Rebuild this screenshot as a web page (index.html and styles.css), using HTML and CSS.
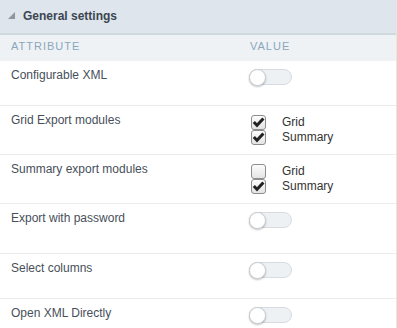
FILE: index.html
```html
<!DOCTYPE html>
<html>
<head>
    <title>General settings</title>
    <meta name="viewport" content="width=device-width, initial-scale=1">
    <link rel="stylesheet" href="styles.css">
</head>
<body>
    <div class="panel">
        <div class="panel-title">
            <span class="caret"></span>
            General settings
        </div>

        <div class="row head">
            <div class="cell">Attribute</div>
            <div class="cell">Value</div>
        </div>

        <div class="row">
            <div class="cell label">Configurable XML</div>
            <div class="cell value"><span class="toggle"></span></div>
        </div>

        <div class="row">
            <div class="cell label">Grid Export modules</div>
            <div class="cell value checks">
                <div class="option"><span class="box checked"></span>Grid</div>
                <div class="option"><span class="box checked"></span>Summary</div>
            </div>
        </div>

        <div class="row">
            <div class="cell label">Summary export modules</div>
            <div class="cell value checks">
                <div class="option"><span class="box"></span>Grid</div>
                <div class="option"><span class="box checked"></span>Summary</div>
            </div>
        </div>

        <div class="row tall">
            <div class="cell label">Export with password</div>
            <div class="cell value"><span class="toggle"></span></div>
        </div>

        <div class="row">
            <div class="cell label">Select columns</div>
            <div class="cell value"><span class="toggle"></span></div>
        </div>

        <div class="row">
            <div class="cell label">Open XML Directly</div>
            <div class="cell value"><span class="toggle"></span></div>
        </div>
    </div>
</body>
</html>
```

FILE: styles.css
```css
body {
    margin: 0;
    font-family: "Liberation Sans", Arial, sans-serif;
    font-size: 12px;
    background: white;
}
.panel {
    width: 396px;
    border-right: 1px solid #e2ebdb;
}
.panel-title {
    display: flex;
    align-items: center;
    height: 31px;
    padding: 0 0 2px 8px;
    background: #dee5ec;
    border-bottom: 2px solid #cfdadf;
    color: #3c4550;
    font-weight: bold;
}
.caret {
    width: 0;
    height: 0;
    margin: 0 8px 1px 0;
    border-left: 7px solid transparent;
    border-bottom: 7px solid #8c97a2;
}
.row {
    display: grid;
    grid-template-columns: 239px 1fr;
    height: 44px;
    border-bottom: 1px solid #e9edf0;
}
.row.tall {
    height: 49px;
}
.row:has(.checks) {
    height: 48px;
}
.row.head {
    height: 22px;
    padding-bottom: 4px;
    background: #eef2f5;
    border-bottom: none;
    line-height: 22px;
    font-size: 11px;
    letter-spacing: 1px;
    text-transform: uppercase;
    color: #8ba6bc;
}
.cell {
    padding-left: 11px;
}
.label {
    padding-top: 6px;
    line-height: 16px;
    color: #474f5a;
}
.value {
    padding-top: 8px;
}
.checks {
    padding-top: 9px;
}
.option {
    display: flex;
    align-items: center;
    height: 15px;
    color: #333;
    line-height: 15px;
}
.box {
    box-sizing: border-box;
    width: 15px;
    height: 15px;
    margin: 0 16px 0 1px;
    border: 1px solid #8d8d8d;
    border-radius: 3px;
    background: linear-gradient(#fcfcfc, #e4e4e4);
}
.box.checked {
    background: url("data:image/svg+xml;utf8,<svg xmlns='http://www.w3.org/2000/svg' width='13' height='13'><path d='M1.8 6 L5 9.3 L11.4 2.4' fill='none' stroke='%23222' stroke-width='3'/></svg>") no-repeat center, linear-gradient(#fcfcfc, #e4e4e4);
}
.toggle {
    position: relative;
    display: block;
    box-sizing: border-box;
    width: 43px;
    height: 16px;
    margin-left: -1px;
    border: 1px solid #d6dce1;
    border-radius: 8px;
    background: #edf1f4;
}
.toggle::before {
    content: "";
    position: absolute;
    left: -1px;
    top: -1px;
    box-sizing: border-box;
    width: 17px;
    height: 17px;
    border: 1px solid #c9ced3;
    border-radius: 50%;
    background: white;
    box-shadow: 0 1px 2px rgba(0,0,0,0.25);
}
```
